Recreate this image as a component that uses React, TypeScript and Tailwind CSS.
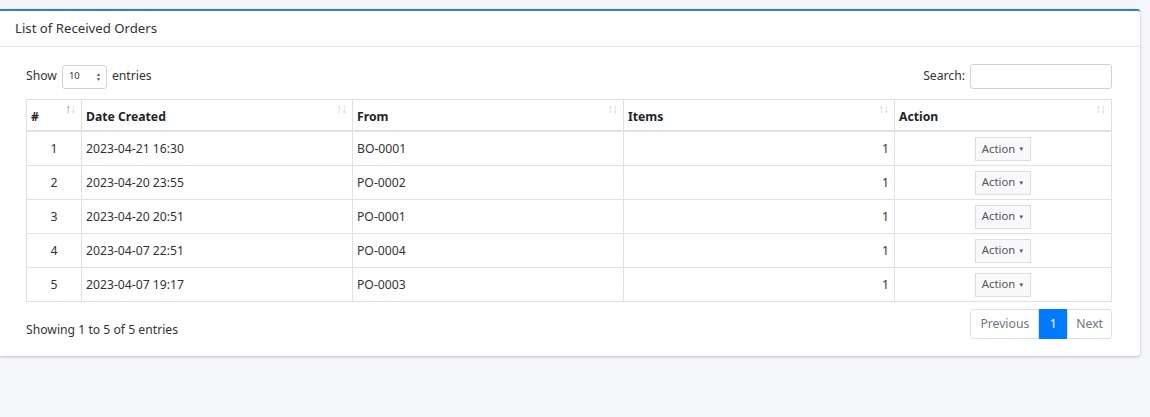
const orders = [
  { id: 1, date: "2023-04-21 16:30", from: "BO-0001", items: 1 },
  { id: 2, date: "2023-04-20 23:55", from: "PO-0002", items: 1 },
  { id: 3, date: "2023-04-20 20:51", from: "PO-0001", items: 1 },
  { id: 4, date: "2023-04-07 22:51", from: "PO-0004", items: 1 },
  { id: 5, date: "2023-04-07 19:17", from: "PO-0003", items: 1 },
]

const SortIcon = ({ active = false }: { active?: boolean }) => (
  <span className="absolute right-[6px] top-[3px] text-[12px] font-normal leading-none tracking-[-1px] text-[#cfcfcf]">
    <span className={active ? "text-[#888]" : ""}>↑</span>
    <span>↓</span>
  </span>
)

const Th = ({ label, w, active = false }: { label: string; w: string; active?: boolean }) => (
  <th className={`relative ${w} border border-[#dee2e6] border-b-2 px-[4px] pt-[8px] pb-[4px] text-left align-bottom text-[12.2px] font-bold text-[#212529]`}>
    {label}
    <SortIcon active={active} />
  </th>
)

const ActionButton = () => (
  <button className="inline-flex h-[24px] items-center gap-[3px] border border-[#ddd] bg-[#f8f9fa] px-[6px] text-[11.3px] text-[#555]">
    Action
    <span className="text-[6px] leading-none">▼</span>
  </button>
)

export default function App() {
  return (
    <div className="min-h-[417px] bg-[#f4f6f9] pt-[9px] pr-[10px] font-['Segoe_UI','Noto_Sans',sans-serif] text-[12.2px] text-[#212529]">
      <div className="rounded-tr-[3px] rounded-br-[3px] border-t-[2px] border-[#2f80c8] bg-white shadow-[0_0_1px_rgba(0,0,0,.2),0_1px_3px_rgba(0,0,0,.2)]">
        <div className="flex h-[36px] items-center border-b border-[#e3e6e9] px-[15px] text-[13.2px] text-[#333]">
          List of Received Orders
        </div>

        <div className="px-[26px] pt-[17px] pb-[17px] pr-[28px]">
          <div className="flex items-center justify-between">
            <div className="flex items-center gap-[5px] text-[#333]">
              <span>Show</span>
              <div className="flex h-[24px] w-[45px] items-center justify-between rounded-[3px] border border-[#ced4da] pl-[6px] pr-[5px] text-[9.5px]">
                <span>10</span>
                <span className="flex flex-col text-[5px] leading-[5px] text-[#555]">
                  <span>▲</span>
                  <span>▼</span>
                </span>
              </div>
              <span>entries</span>
            </div>
            <label className="flex items-center gap-[5px] text-[#333]">
              Search:
              <input className="h-[25px] w-[142px] rounded-[3px] border border-[#ced4da] outline-none" />
            </label>
          </div>

          <table className="mt-[10px] w-full border-collapse">
            <thead>
              <tr className="h-[29px]">
                <Th label="#" w="w-[55px]" active />
                <Th label="Date Created" w="w-[271px]" />
                <Th label="From" w="w-[271px]" />
                <Th label="Items" w="w-[271px]" />
                <Th label="Action" w="" />
              </tr>
            </thead>
            <tbody>
              {orders.map((o) => (
                <tr key={o.id} className="h-[34px] text-[12.2px] text-[#333]">
                  <td className="border border-[#dee2e6] px-[4px] pt-[2px] text-center">{o.id}</td>
                  <td className="border border-[#dee2e6] px-[4px] pt-[2px]">{o.date}</td>
                  <td className="border border-[#dee2e6] px-[4px] pt-[2px]">{o.from}</td>
                  <td className="border border-[#dee2e6] px-[5px] pt-[2px] text-right">{o.items}</td>
                  <td className="border border-[#dee2e6] px-[4px] pt-[1px] text-center">
                    <ActionButton />
                  </td>
                </tr>
              ))}
            </tbody>
          </table>

          <div className="mt-[7px] flex justify-between">
            <span className="pt-[12px] text-[#333]">Showing 1 to 5 of 5 entries</span>
            <div className="flex h-[30px] text-[12.2px]">
              <span className="flex items-center rounded-l-[3px] border border-[#dee2e6] px-[9px] text-[#6c757d]">Previous</span>
              <span className="flex w-[28px] items-center justify-center bg-[#007bff] text-white">1</span>
              <span className="flex items-center rounded-r-[3px] border border-[#dee2e6] px-[8px] text-[#6c757d]">Next</span>
            </div>
          </div>
        </div>
      </div>
    </div>
  )
}
